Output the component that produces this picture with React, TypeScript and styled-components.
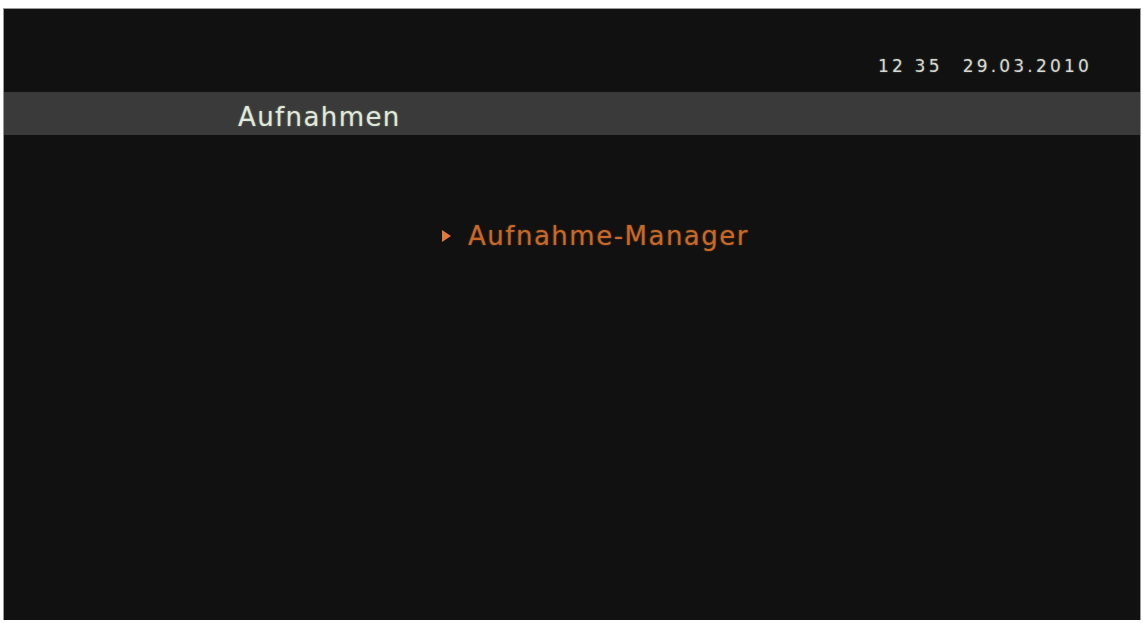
import React from "react";
import styled, { createGlobalStyle } from "styled-components";

const Global = createGlobalStyle`
  html, body { margin: 0; padding: 0; background: #ffffff; }
  body { overflow: hidden; }
`;

const Screen = styled.div`
  box-sizing: border-box;
  margin: 9px 3px 0 4px;
  width: 1136px;
  height: 611px;
  background: #111111;
  box-shadow: 0 0 0 1px #9a9a9a;
  display: flex;
  flex-direction: column;
  font-family: "DejaVu Sans", "Liberation Sans", sans-serif;
`;

const StatusRow = styled.div`
  height: 83px;
  display: flex;
  justify-content: flex-end;
  align-items: flex-start;
  padding: 47px 48px 0 0;
  box-sizing: border-box;
`;

const Clock = styled.div`
  color: #d6d8d2;
  font-size: 17px;
  letter-spacing: 3.2px;
  display: flex;
  gap: 20px;
  text-shadow: 0 0 2px rgba(200, 220, 200, 0.4);
`;

const TitleBar = styled.div`
  height: 43px;
  box-sizing: border-box;
  background: #3a3a3a;
  display: flex;
  align-items: center;
  padding: 7px 0 0 234px;
`;

const Title = styled.div`
  color: #e2e8df;
  font-size: 26px;
  letter-spacing: 1.4px;
  text-shadow: 0 0 2px rgba(180, 230, 170, 0.5);
`;

const Menu = styled.div`
  display: flex;
  flex-direction: column;
  padding: 86px 0 0 438px;
`;

const MenuItem = styled.div<{ $active?: boolean }>`
  display: flex;
  align-items: center;
  gap: 17px;
  color: ${(p) => (p.$active ? "#c8692a" : "#bbbbbb")};
  font-size: 26px;
  letter-spacing: 1.5px;
  text-shadow: 0 0 2px rgba(200, 110, 40, 0.5);
`;

const Arrow = styled.span`
  width: 0;
  height: 0;
  border-top: 6px solid transparent;
  border-bottom: 6px solid transparent;
  border-left: 9px solid #e07a3a;
  filter: blur(0.4px);
`;

export default function App() {
  return (
    <>
      <Global />
      <Screen>
        <StatusRow>
          <Clock>
            <span>12 35</span>
            <span>29.03.2010</span>
          </Clock>
        </StatusRow>
        <TitleBar>
          <Title>Aufnahmen</Title>
        </TitleBar>
        <Menu>
          <MenuItem $active>
            <Arrow />
            <span>Aufnahme-Manager</span>
          </MenuItem>
        </Menu>
      </Screen>
    </>
  );
}
